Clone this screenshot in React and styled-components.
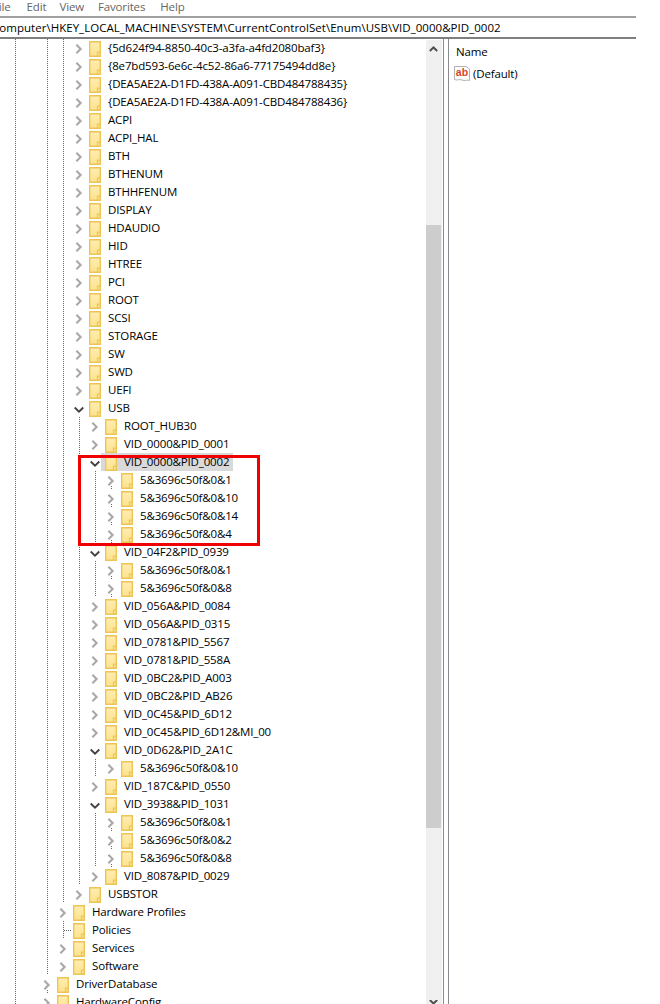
import React from 'react';
import styled, { createGlobalStyle } from 'styled-components';

const GlobalStyle = createGlobalStyle`
  html, body {
    margin: 0;
    padding: 0;
    background: #fff;
    overflow: hidden;
  }
`;

const Page = styled.div`
  width: 660px;
  height: 1004px;
  overflow: hidden;
  background: #fff;
  color: #000;
  font-family: "Open Sans", "Noto Sans", sans-serif;
  font-size: 11.5px;
  letter-spacing: -0.15px;
`;

const MenuBar = styled.div`
  display: flex;
  height: 16px;
  line-height: 14px;
  margin-left: -7px;
  color: #666;
`;

const MenuItem = styled.span`
  margin-right: ${(p) => p.$gap}px;
`;

const AddressBar = styled.div`
  width: 636px;
  height: 23px;
  box-sizing: border-box;
  border-top: 2px solid #a0a0a0;
  border-bottom: 2px solid #7f7f7f;
  line-height: 19px;
  white-space: nowrap;
  overflow: hidden;
  text-indent: -8px;
  letter-spacing: 0.03px;
`;

const Main = styled.div`
  display: flex;
  height: 965px;
`;

const TreePane = styled.div`
  position: relative;
  width: 426px;
  overflow: hidden;
`;

const Row = styled.div`
  display: flex;
  align-items: center;
  height: 18px;
  padding-left: 15px;
  white-space: nowrap;
`;

const Slot = styled.span`
  flex: none;
  width: 16px;
  height: 18px;
  display: flex;
  align-items: center;
  position: relative;
  ${(p) => p.$line && `
    background-image: repeating-linear-gradient(to bottom, #666 0 1px, transparent 1px 2px);
    background-size: 1px 18px;
    background-repeat: no-repeat;
  `}
  ${(p) => p.$tail && `
    background-image: repeating-linear-gradient(to bottom, #666 0 1px, transparent 1px 2px);
    background-size: 1px 3px;
    background-repeat: no-repeat;
    background-position: 0 15px;
  `}
`;

const Stub = styled.span`
  position: absolute;
  left: 1px;
  top: 9px;
  width: 8px;
  height: 1px;
  background-image: repeating-linear-gradient(to right, #666 0 1px, transparent 1px 2px);
`;

const ChevronIcon = styled.svg`
  flex: none;
  margin-left: -5px;
  width: 10px;
  height: 12px;
`;

// folder and label share the grey background of a selected key
const Item = styled.div`
  display: flex;
  align-items: center;
  height: 18px;
  margin-left: -10px;
  padding: 0 4px 0 4px;
  ${(p) => p.$selected && 'background: #d9d9d9;'}
`;

const FolderIcon = styled.svg`
  flex: none;
  width: 14px;
  height: 18px;
`;

const Label = styled.span`
  margin-left: 5px;
  line-height: 18px;
`;

const RedBox = styled.div`
  position: absolute;
  left: 78px;
  top: 416px;
  width: 176px;
  height: 85px;
  border: 3px solid #f00000;
  pointer-events: none;
`;

const Scrollbar = styled.div`
  width: 16px;
  margin-top: 1px;
  background: #f0f0f0;
  display: flex;
  flex-direction: column;
`;

const ScrollButton = styled.svg`
  flex: none;
  width: 16px;
  height: 185px;
`;

const ScrollThumb = styled.div`
  flex: none;
  width: 15px;
  height: 603px;
  background: #cdcdcd;
`;

const ScrollEnd = styled.div`
  flex: 1;
  display: flex;
  align-items: flex-end;
`;

const Splitter = styled.div`
  flex: none;
  width: 6px;
  margin-left: 1px;
  box-sizing: border-box;
  border-left: 1px solid #8a8a90;
  border-right: 1px solid #8a8a90;
`;

const ValuePane = styled.div`
  flex: 1;
  padding-left: 5px;
`;

const ValueHeader = styled.div`
  height: 18px;
  margin: 4px 0 0 2px;
  line-height: 18px;
`;

const ValueRow = styled.div`
  display: flex;
  align-items: center;
  height: 17px;
  margin-top: 4px;
`;

const ValueText = styled.span`
  margin-left: 2px;
`;

const Chevron = ({ open }) => (
  <ChevronIcon viewBox="0 0 10 12">
    {open ? (
      <path d="M0.7 5.5 L5 9.7 L9.3 5.5" fill="none" stroke="#404040" strokeWidth="1.8" />
    ) : (
      <path d="M2.4 2.8 L6.6 7 L2.4 11.2" fill="none" stroke="#a8a8a8" strokeWidth="2.1" />
    )}
  </ChevronIcon>
);

const Folder = ({ id }) => (
  <FolderIcon viewBox="0 0 14 18">
    <defs>
      <linearGradient id={id} x1="0" y1="0" x2="0" y2="1">
        <stop offset="0" stopColor="#ffedb0" />
        <stop offset="1" stopColor="#fde28e" />
      </linearGradient>
    </defs>
    <path d="M0.7 2.7 H11.3 V17.3 H0.7 Z" fill={`url(#${id})`} stroke="#ebc555" strokeWidth="1.4" />
    <path d="M8.5 17.3 V13.2 H11.3" fill="none" stroke="#ebc555" strokeWidth="1.2" />
  </FolderIcon>
);

const DefaultIcon = () => (
  <svg width="17" height="17" viewBox="0 0 17 17">
    <path d="M0.5 1.5 H12 L15.5 4 V15.5 C13 14.2 11 16.5 8 15 C5.5 13.8 3 15.8 0.5 14.5 Z" fill="#fff" stroke="#a8a8a8" strokeWidth="0.9" />
    <text x="1.8" y="10.5" fontFamily="'Liberation Sans', sans-serif" fontWeight="700" fontSize="10.5" letterSpacing="0" fill="#d8452a">ab</text>
  </svg>
);

// level = column of the chevron, guides = columns that carry a dotted line
const top = [0, 2, 3];
const usb = [0, 2, 3, 4];
const nest = [0, 2, 3, 4, 5];
const key = (label, level, guides, extra) => ({ label, level, guides, ...extra });
const rows = [
  ...[
    '{5d624f94-8850-40c3-a3fa-a4fd2080baf3}',
    '{8e7bd593-6e6c-4c52-86a6-77175494dd8e}',
    '{DEA5AE2A-D1FD-438A-A091-CBD484788435}',
    '{DEA5AE2A-D1FD-438A-A091-CBD484788436}',
    'ACPI', 'ACPI_HAL', 'BTH', 'BTHENUM', 'BTHHFENUM', 'DISPLAY', 'HDAUDIO', 'HID',
    'HTREE', 'PCI', 'ROOT', 'SCSI', 'STORAGE', 'SW', 'SWD', 'UEFI',
  ].map((l) => key(l, 4, top)),
  key('USB', 4, top, { open: true }),
  key('ROOT_HUB30', 5, usb),
  key('VID_0000&PID_0001', 5, usb),
  key('VID_0000&PID_0002', 5, usb, { open: true, selected: true }),
  ...['5&3696c50f&0&1', '5&3696c50f&0&10', '5&3696c50f&0&14', '5&3696c50f&0&4'].map((l) => key(l, 6, nest, { tail: true })),
  key('VID_04F2&PID_0939', 5, usb, { open: true }),
  ...['5&3696c50f&0&1', '5&3696c50f&0&8'].map((l) => key(l, 6, nest, { tail: true })),
  ...['VID_056A&PID_0084', 'VID_056A&PID_0315', 'VID_0781&PID_5567', 'VID_0781&PID_558A', 'VID_0BC2&PID_A003', 'VID_0BC2&PID_AB26', 'VID_0C45&PID_6D12', 'VID_0C45&PID_6D12&MI_00'].map((l) => key(l, 5, usb)),
  key('VID_0D62&PID_2A1C', 5, usb, { open: true }),
  key('5&3696c50f&0&10', 6, nest),
  key('VID_187C&PID_0550', 5, usb),
  key('VID_3938&PID_1031', 5, usb, { open: true }),
  ...['5&3696c50f&0&1', '5&3696c50f&0&2', '5&3696c50f&0&8'].map((l) => key(l, 6, nest, { tail: true })),
  key('VID_8087&PID_0029', 5, usb),
  key('USBSTOR', 4, top),
  key('Hardware Profiles', 3, [0, 2]),
  key('Policies', 3, [0, 2, 3], { stub: true }),
  key('Services', 3, [0, 2]),
  key('Software', 3, [0, 2]),
  key('DriverDatabase', 2, [0], { tail: true }),
  key('HardwareConfig', 2, [0]),
];

function TreeRow({ row, index }) {
  const slots = [];
  for (let i = 0; i <= row.level; i++) {
    const isLast = i === row.level;
    slots.push(
      <Slot key={i} $line={row.guides.includes(i)} $tail={isLast && row.tail}>
        {isLast && !row.stub && <Chevron open={row.open} />}
        {isLast && row.stub && <Stub />}
      </Slot>
    );
  }
  return (
    <Row>
      {slots}
      <Item $selected={row.selected}>
        <Folder id={`folder-${index}`} />
        <Label>{row.label}</Label>
      </Item>
    </Row>
  );
}

export default function App() {
  return (
    <Page>
      <GlobalStyle />
      <MenuBar>
        <MenuItem $gap={16}>File</MenuItem>
        <MenuItem $gap={13}>Edit</MenuItem>
        <MenuItem $gap={14}>View</MenuItem>
        <MenuItem $gap={15}>Favorites</MenuItem>
        <MenuItem $gap={0}>Help</MenuItem>
      </MenuBar>
      <AddressBar>Computer\HKEY_LOCAL_MACHINE\SYSTEM\CurrentControlSet\Enum\USB\VID_0000&amp;PID_0002</AddressBar>
      <Main>
        <TreePane>
          {rows.map((row, i) => (
            <TreeRow key={i} row={row} index={i} />
          ))}
          <RedBox />
        </TreePane>
        <Scrollbar>
          <ScrollButton viewBox="0 0 16 185">
            <path d="M3.8 11 L7.5 7.5 L11.2 11" fill="none" stroke="#505050" strokeWidth="2" />
          </ScrollButton>
          <ScrollThumb />
          <ScrollEnd>
            <svg width="16" height="4" viewBox="0 0 16 4">
              <path d="M3.8 0 L7.5 3.5 L11.2 0" fill="none" stroke="#505050" strokeWidth="2" />
            </svg>
          </ScrollEnd>
        </Scrollbar>
        <Splitter />
        <ValuePane>
          <ValueHeader>Name</ValueHeader>
          <ValueRow>
            <DefaultIcon />
            <ValueText>(Default)</ValueText>
          </ValueRow>
        </ValuePane>
      </Main>
    </Page>
  );
}
